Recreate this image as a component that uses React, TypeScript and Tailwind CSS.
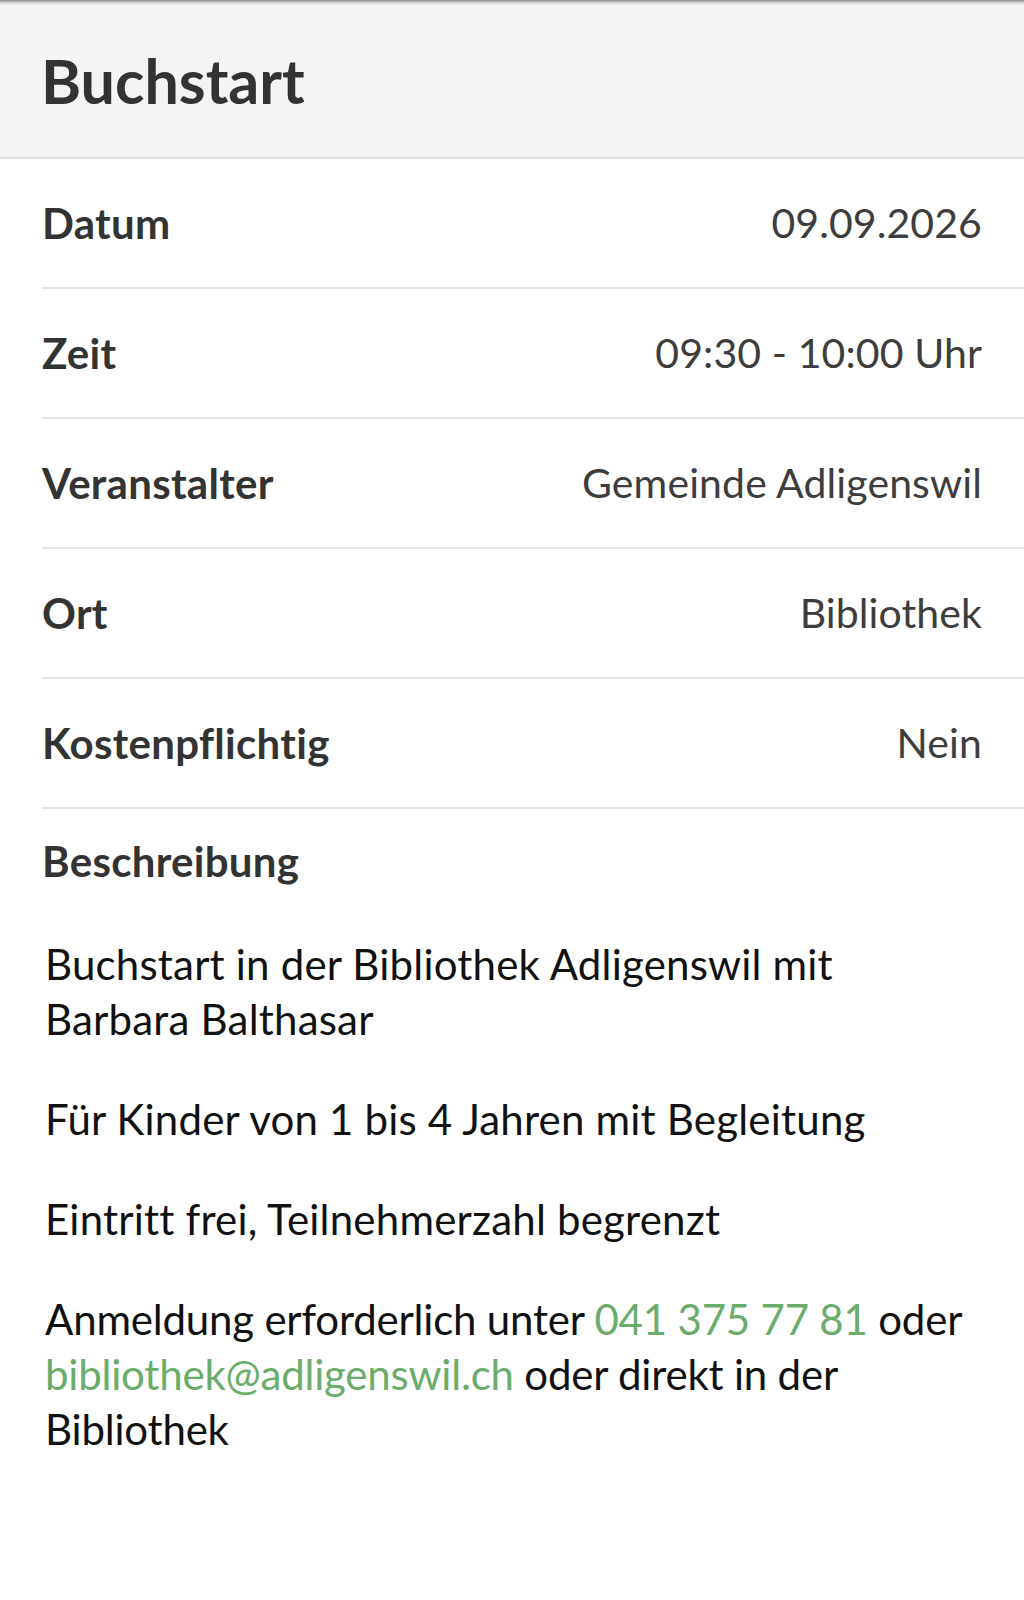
import React from "react";

const rows: [string, string][] = [
  ["Datum", "09.09.2026"],
  ["Zeit", "09:30 - 10:00 Uhr"],
  ["Veranstalter", "Gemeinde Adligenswil"],
  ["Ort", "Bibliothek"],
  ["Kostenpflichtig", "Nein"],
];

export default function App() {
  return (
    <div
      className="min-h-[1600px] w-[1024px] bg-white"
      style={{ fontFamily: "Lato, 'Open Sans', sans-serif" }}
    >
      <header className="relative h-[159px] border-b-2 border-[#e2e2e2] bg-[#f4f4f4]">
        <div className="absolute inset-x-0 top-0 h-[6px] bg-gradient-to-b from-[#8a8a8a] via-[#dcdcdc] to-[#f4f4f4]" />
        <div className="flex h-full items-center pl-[41px] pt-[3px]">
          <h1 className="text-[61px] font-bold leading-none text-[#333]">
            Buchstart
          </h1>
        </div>
      </header>
      <div>
        {rows.map(([label, value]) => (
          <div
            key={label}
            className="ml-[42px] flex h-[130px] items-center justify-between border-b-2 border-[#e4e4e4] pr-[42px]"
          >
            <span className="text-[42px] font-bold tracking-[0.3px] text-[#333]">{label}</span>
            <span className="text-[41px] tracking-[0.1px] text-[#3d3d3d]">{value}</span>
          </div>
        ))}
        <div className="px-[42px] pt-[24px]">
          <div className="text-[42px] font-bold leading-[56px] tracking-[0.3px] text-[#333]">
            Beschreibung
          </div>
          <div className="mt-[48px] flex flex-col gap-[45px] whitespace-nowrap pl-[3px] text-[42px] leading-[55px] tracking-[0.2px] text-[#111]">
            <p>
              Buchstart in der Bibliothek Adligenswil mit
              <br />
              Barbara Balthasar
            </p>
            <p>Für Kinder von 1 bis 4 Jahren mit Begleitung</p>
            <p>Eintritt frei, Teilnehmerzahl begrenzt</p>
            <p className="tracking-[-0.2px]">
              Anmeldung erforderlich unter{" "}
              <a className="text-[#6aad6a]">041 375 77 81</a> oder
              <br />
              <a className="text-[#6aad6a]">bibliothek@adligenswil.ch</a> oder direkt in der
              <br />
              Bibliothek
            </p>
          </div>
        </div>
      </div>
    </div>
  );
}
